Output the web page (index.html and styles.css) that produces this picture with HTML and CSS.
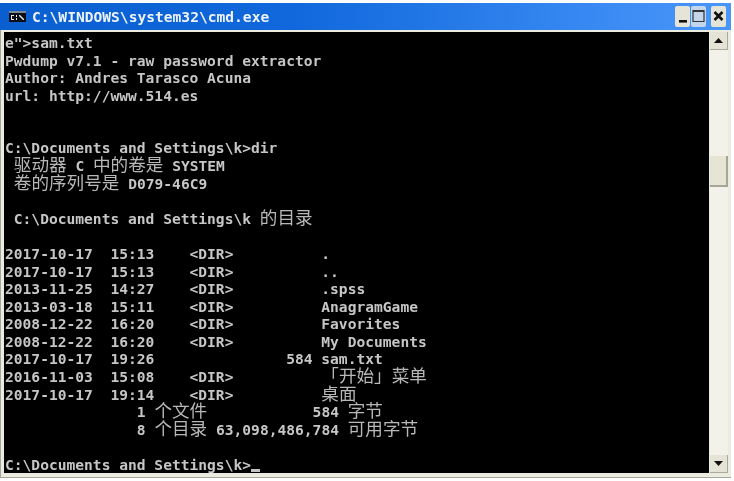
FILE: index.html
```html
<!DOCTYPE html>
<html lang="zh">
<head>
<meta charset="utf-8">
<title>cmd.exe</title>
<link rel="stylesheet" href="styles.css">
</head>
<body>
<div class="window">
  <div class="titlebar">
    <svg class="app-icon" width="17" height="11" viewBox="0 0 17 11">
      <rect x="0" y="0" width="17" height="11" fill="#0c0c14"/>
      <rect x="0" y="0" width="17" height="2" fill="#7f8696"/>
      <path d="M2 4h3v1H3v3h2v1H2zM7 4h1v2H7zM7 7h1v2H7zM10 4h1l1 1 1 1 1 1 1 1v1h-1l-1-1-1-1-1-1-1-1z" fill="#e8e8e8"/>
    </svg>
    <span class="title">C:\WINDOWS\system32\cmd.exe</span>
    <div class="controls">
      <div class="ctl"><svg width="14" height="20" viewBox="0 0 14 20"><rect x="3" y="14" width="8" height="2.6" fill="#111"/></svg></div>
      <div class="ctl ctl-max"><svg width="15" height="20" viewBox="0 0 15 20"><path d="M2 4.5h11v11H2zM2 5.5h11" fill="none" stroke="#333" stroke-width="1.2"/></svg></div>
      <div class="ctl close"><svg width="15" height="20" viewBox="0 0 15 20"><path d="M3.5 6l8 8M11.5 6l-8 8" stroke="#111" stroke-width="2.6"/></svg></div>
    </div>
  </div>
  <div class="client">
    <div class="console">
<div class="ln">e"&gt;sam.txt</div>
<div class="ln">Pwdump v7.1 - raw password extractor</div>
<div class="ln">Author: Andres Tarasco Acuna</div>
<div class="ln">url: http://www.514.es</div>
<div class="ln"></div>
<div class="ln"></div>
<div class="ln">C:\Documents and Settings\k&gt;dir</div>
<div class="ln"> <span class="zh">驱动器</span> C <span class="zh">中的卷是</span> SYSTEM</div>
<div class="ln"> <span class="zh">卷的序列号是</span> D079-46C9</div>
<div class="ln"></div>
<div class="ln"> C:\Documents and Settings\k <span class="zh">的目录</span></div>
<div class="ln"></div>
<div class="ln">2017-10-17  15:13    &lt;DIR&gt;          .</div>
<div class="ln">2017-10-17  15:13    &lt;DIR&gt;          ..</div>
<div class="ln">2013-11-25  14:27    &lt;DIR&gt;          .spss</div>
<div class="ln">2013-03-18  15:11    &lt;DIR&gt;          AnagramGame</div>
<div class="ln">2008-12-22  16:20    &lt;DIR&gt;          Favorites</div>
<div class="ln">2008-12-22  16:20    &lt;DIR&gt;          My Documents</div>
<div class="ln">2017-10-17  19:26               584 sam.txt</div>
<div class="ln">2016-11-03  15:08    &lt;DIR&gt;          <span class="zh">「开始」菜单</span></div>
<div class="ln">2017-10-17  19:14    &lt;DIR&gt;          <span class="zh">桌面</span></div>
<div class="ln">               1 <span class="zh">个文件</span>            584 <span class="zh">字节</span></div>
<div class="ln">               8 <span class="zh">个目录</span> 63,098,486,784 <span class="zh">可用字节</span></div>
<div class="ln"></div>
<div class="ln">C:\Documents and Settings\k&gt;<span class="cursor"></span></div>
    </div>
    <div class="scrollbar">
      <div class="sb-btn"><svg width="9" height="5" viewBox="0 0 9 5"><path d="M4.5 0L9 5H0z" fill="#111"/></svg></div>
      <div class="sb-upper"></div>
      <div class="sb-thumb"></div>
      <div class="sb-lower"></div>
      <div class="sb-btn"><svg width="9" height="5" viewBox="0 0 9 5"><path d="M0 0h9L4.5 5z" fill="#111"/></svg></div>
    </div>
  </div>
</div>
</body>
</html>
```

FILE: styles.css
```css
* { box-sizing: border-box; }
html, body { margin: 0; padding: 0; background: #fff; }
body { width: 734px; height: 481px; overflow: hidden; }
.window {
  margin: 3px 3px 0 0;
  height: 475px;
  display: flex;
  flex-direction: column;
  background: #ecebe0;
  border-bottom: 1px solid #a5a59b;
}
.titlebar {
  height: 27px;
  flex: none;
  display: flex;
  align-items: center;
  padding-left: 9px;
  background: linear-gradient(90deg, #0a5fd0 0%, #1068dc 40%, #3c8cf4 85%, #4a96f8 100%);
  filter: blur(0.5px);
}
.app-icon { flex: none; }
.title {
  margin-left: 6px;
  font: bold 14.6px "DejaVu Sans Mono", monospace;
  color: #eef3fb;
  white-space: pre;
}
.controls { margin-left: auto; display: flex; gap: 1px; padding: 0 5px 1px 0; }
.ctl {
  width: 15px;
  height: 21px;
  background: #e5e4d6;
  border-radius: 2px;
  display: flex;
  align-items: center;
  justify-content: center;
}
.ctl-max { background: #c4d6ea; }
.close { margin-left: 4px; }
.client {
  flex: 1;
  min-height: 0;
  display: flex;
  padding: 2px 3px 4px 3px;
  background: #ecebe0;
  border-left: 1px solid #a5a59b;
}
.console {
  flex: 1;
  background: #000;
  padding-top: 2px;
  overflow: hidden;
}
.ln {
  height: 17.58px;
  padding-left: 1px;
  white-space: pre;
  font: bold 14.6px/17.58px "DejaVu Sans Mono", "Noto Sans CJK SC", monospace;
  color: #c6c6c6;
  filter: blur(0.45px);
}
.zh {
  font: normal 17.6px/0 "Noto Sans CJK SC", sans-serif;
  color: #b8b8b8;
}
.cursor {
  display: inline-block;
  width: 9px;
  height: 3px;
  background: #c4c4c4;
  vertical-align: -2px;
}
.scrollbar {
  width: 18px;
  margin-left: 1px;
  flex: none;
  display: flex;
  flex-direction: column;
  background: #f3f2ea;
}
.sb-btn {
  height: 18px;
  flex: none;
  display: flex;
  align-items: center;
  justify-content: center;
  background: #e4e3d6;
  border-right: 1px solid #a9a99c;
  border-bottom: 1px solid #a9a99c;
}
.sb-upper { height: 106px; flex: none; }
.sb-thumb {
  height: 31px;
  flex: none;
  background: #e6e5d5;
  border-right: 2px solid #a5a59a;
  border-bottom: 2px solid #a5a59a;
}
.sb-lower { flex: 1; }
```
